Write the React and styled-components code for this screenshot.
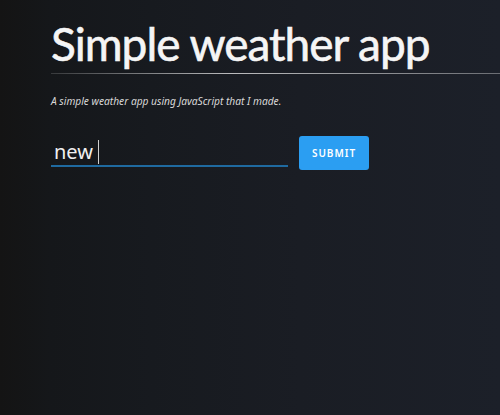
import React from "react";
import styled, { createGlobalStyle } from "styled-components";

const Global = createGlobalStyle`
  html, body { margin: 0; padding: 0; height: 100%; }
  body {
    background: linear-gradient(90deg, #141414 0%, #15171a 10%, #171a1f 30%, #1a1d24 60%, #1c2029 100%);
    font-family: "Noto Sans", "Open Sans", sans-serif;
    color: #fff;
  }
  #root { min-height: 415px; }
`;

const Page = styled.main`
  min-height: 415px;
  padding: 14px 0 0 51px;
  box-sizing: border-box;
`;

const Title = styled.h1`
  margin: 0;
  font-family: Lato, "Noto Sans", sans-serif;
  font-size: 46px;
  font-weight: 400;
  line-height: 59px;
  color: #f5f5f5;
  letter-spacing: -1px;
  -webkit-text-stroke: 0.6px #f5f5f5;
`;

const Rule = styled.hr`
  margin: 0;
  border: 0;
  height: 1px;
  background: linear-gradient(90deg, rgba(255,255,255,0.15), rgba(255,255,255,0.7) 40%, rgba(255,255,255,0.35));
`;

const Subtitle = styled.p`
  margin: 20px 0 0;
  font-size: 10.2px;
  font-style: italic;
  color: #d8d8d8;
`;

const Form = styled.form`
  display: flex;
  align-items: center;
  gap: 11px;
  margin-top: 25px;
`;

const Field = styled.div`
  position: relative;
  width: 237px;
  height: 30px;
  border-bottom: 2px solid #1f6aa0;
  display: flex;
  align-items: flex-end;
  padding-left: 3px;
  box-sizing: border-box;
`;

const Value = styled.span`
  font-size: 20px;
  line-height: 26px;
  color: #f0f0f0;
  font-weight: 400;
`;

const Caret = styled.span`
  display: inline-block;
  width: 1px;
  height: 24px;
  background: #d0d0d0;
  margin-left: 5px;
  margin-bottom: 1px;
`;

const Button = styled.button`
  width: 70px;
  height: 34px;
  border: 0;
  border-radius: 3px;
  background: #2b9ef2;
  color: #fff;
  font-family: "Noto Sans", sans-serif;
  font-size: 10px;
  font-weight: 600;
  letter-spacing: 1px;
  margin-top: 3px;
`;

export default function App() {
  return (
    <>
      <Global />
      <Page>
        <Title>Simple weather app</Title>
        <Rule />
        <Subtitle>A simple weather app using JavaScript that I made.</Subtitle>
        <Form onSubmit={(e) => e.preventDefault()}>
          <Field>
            <Value>new</Value>
            <Caret />
          </Field>
          <Button type="submit">SUBMIT</Button>
        </Form>
      </Page>
    </>
  );
}
